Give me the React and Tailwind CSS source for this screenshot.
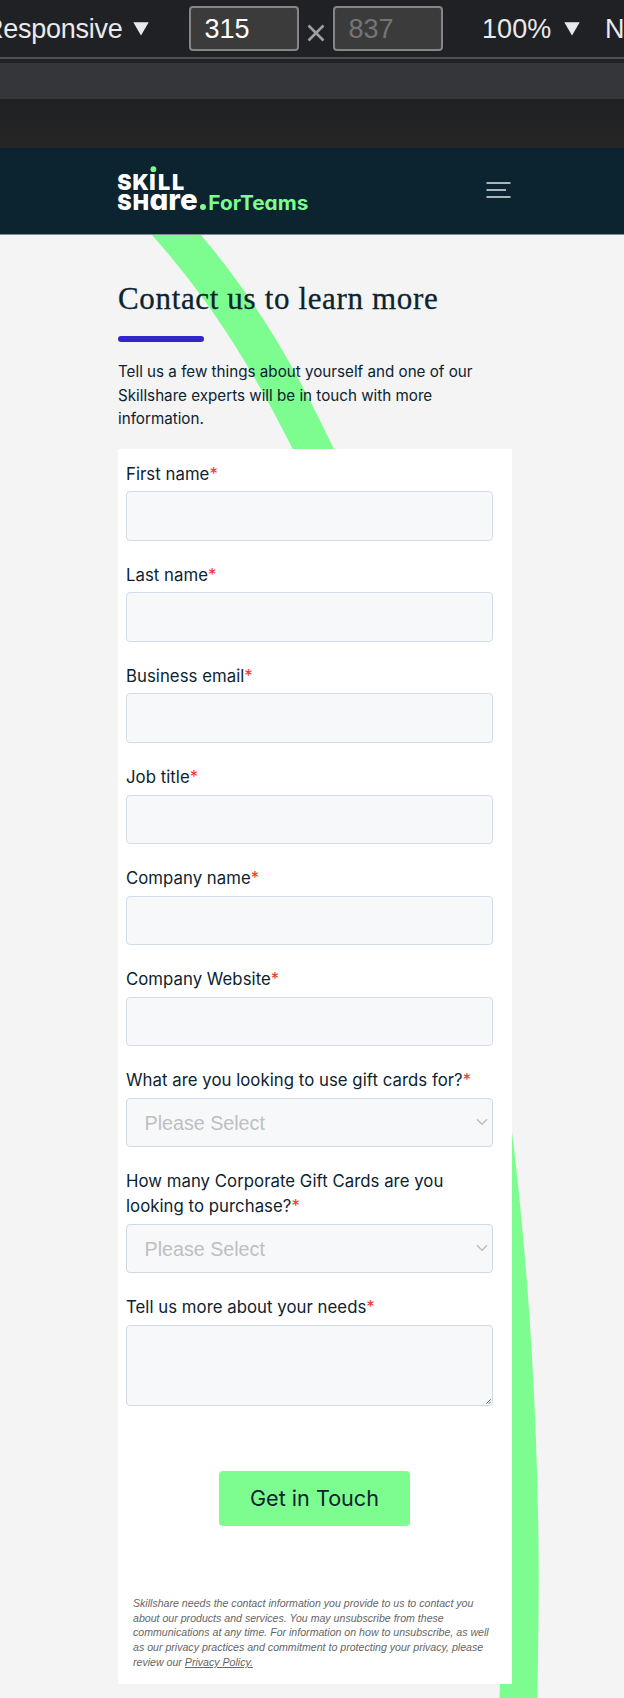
const TEXT_FIELDS = [
  "First name",
  "Last name",
  "Business email",
  "Job title",
  "Company name",
  "Company Website",
];

const SELECT_FIELDS = [
  "What are you looking to use gift cards for?",
  "How many Corporate Gift Cards are you looking to purchase?",
];

function Triangle() {
  return (
    <svg className="h-[14px] w-4 shrink-0" viewBox="0 0 16 14" fill="#e8eaed">
      <path d="M0.3 0.3h15.4L8 13.6z" />
    </svg>
  );
}

function DeviceToolbar() {
  return (
    <div className="font-['Liberation_Sans',sans-serif] text-[27px] text-[#e8eaed]">
      <div className="flex h-[57px] overflow-hidden bg-[#202124] whitespace-nowrap">
        <div className="flex w-[189px] shrink-0 justify-end pr-[40px]">
          <span className="flex h-[57px] items-center pt-px">
            <span className="pr-[10.5px] tracking-[-0.25px]">Responsive</span>
            <Triangle />
          </span>
        </div>
        <div className="mt-[6px] flex h-[45px] w-[110px] shrink-0 items-center rounded-[4px] border-2 border-[#858585] bg-[#3b3b3b] pt-[2px] pl-[13.5px] text-white">
          315
        </div>
        <svg className="mt-6 ml-2 h-[18px] w-[18px] shrink-0" viewBox="0 0 18 18">
          <path d="M1.5 1.5l15 15M16.5 1.5l-15 15" stroke="#9aa0a6" strokeWidth="2.6" />
        </svg>
        <div className="mt-[6px] ml-2 flex h-[45px] w-[110px] shrink-0 items-center rounded-[4px] border-2 border-[#858585] bg-[#3b3b3b] pt-[2px] pl-[13.5px] text-[#757575]">
          837
        </div>
        <span className="ml-[39px] flex h-[57px] shrink-0 items-center pt-px">
          <span className="w-[82px] tracking-[0.1px]">100%</span>
          <Triangle />
          <span className="ml-[25px]">No throttling</span>
        </span>
      </div>
      <div className="h-[2px] bg-[#4f4f53]" />
      <div className="h-1 bg-[#202124]" />
      <div className="h-9 bg-[#35363a]" />
      <div className="h-[49px] bg-linear-to-b from-[#202123] to-[#262626]" />
    </div>
  );
}

function Logo() {
  return (
    <svg
      className="mt-[17px] h-[48px] w-[194px] overflow-visible [font-feature-settings:'cv11']"
      viewBox="0 0 194 48"
      fill="#fff"
      fontFamily="Inter, sans-serif"
      fontWeight="900"
    >
      <text x="-0.7 14.4 31.3 40 54" y="24.8" fontSize="21.5">SKILL</text>
      <text x="-0.7 14.8" y="44.8" fontSize="21.5">SH</text>
      <text x="31.4 50.2 62" y="44.8" fontSize="29.5" fontWeight="800">are</text>
      <circle cx="35.4" cy="4.2" r="2.9" fill="#7dfc90" />
      <circle cx="85" cy="42" r="3" fill="#7dfc90" />
      <text x="90.3" y="44.8" fontSize="19.8" fontWeight="700" fill="#7dfc90" textLength="100" lengthAdjust="spacingAndGlyphs">
        ForTeams
      </text>
    </svg>
  );
}

function SiteHeader() {
  return (
    <header className="flex h-[87px] items-start justify-between border-b border-[#7f8b96] bg-[#0c2330] pr-[113px] pl-[118px]">
      <Logo />
      <svg className="mt-[32px] h-[20px] w-[25px]" viewBox="0 0 25 20" stroke="#aab4ba" strokeWidth="1.9">
        <path d="M0.5 3h24M0.5 10h19.5M0.5 17h24" />
      </svg>
    </header>
  );
}

function Label({ children }) {
  return (
    <div className="mb-[5px] text-[16.75px] leading-[24.8px] tracking-[0.04px]">
      {children}
      <span className="text-[#f03a2b]">*</span>
    </div>
  );
}

function TextField({ label }) {
  return (
    <label className="block">
      <Label>{label}</Label>
      <div className="h-[49.4px] rounded-[4px] border-[1.5px] border-[#d3dce8] bg-[#f6f8fa]" />
    </label>
  );
}

function SelectField({ label }) {
  return (
    <label className="block">
      <Label>{label}</Label>
      <div className="flex h-[49.4px] items-center justify-between rounded-[4px] border-[1.5px] border-[#cfdae6] bg-[#f6f8fa] pr-1 pl-[17.5px] font-['Liberation_Sans',sans-serif] text-[19.7px] text-[#bfbfbf]">
        <span className="pt-[2px]">Please Select</span>
        <svg className="h-2 w-3" viewBox="0 0 12 8" fill="none" stroke="#bdbdbd" strokeWidth="1.4">
          <path d="M1 1.2l5 5 5-5" />
        </svg>
      </div>
    </label>
  );
}

function ContactForm() {
  return (
    <form className="relative mt-[18px] h-[1235.3px] w-[394px] bg-white pt-[13px] pr-[19.5px] pl-2 text-[#0c2330]">
      <div className="flex flex-col gap-[21.9px]">
        {TEXT_FIELDS.map((label) => (
          <TextField key={label} label={label} />
        ))}
        {SELECT_FIELDS.map((label) => (
          <SelectField key={label} label={label} />
        ))}
        <label className="block">
          <Label>Tell us more about your needs</Label>
          <div className="flex h-[81.5px] items-end justify-end rounded-[4px] border-[1.5px] border-[#cfdae6] bg-[#f6f8fa] p-px">
            <svg className="h-[5px] w-[5px]" viewBox="0 0 5 5" stroke="#555" strokeWidth="0.9">
              <path d="M0.3 4.7l4.4-4.4M2.8 4.7l1.9-1.9" />
            </svg>
          </div>
        </label>
      </div>
      <div className="mt-[65px] ml-[93px]">
        <button
          type="button"
          className="h-[54.6px] w-[191px] rounded-[4px] bg-[#7dfc90] text-[21.6px] text-[#0c2330]"
        >
          Get in Touch
        </button>
      </div>
      <p className="mt-[70px] -mr-3 ml-[7px] font-['Liberation_Sans',sans-serif] text-[10.6px] leading-[14.8px] text-[#666] italic">
        Skillshare needs the contact information you provide to us to contact you
        <br />
        about our products and services. You may unsubscribe from these
        <br />
        communications at any time. For information on how to unsubscribe, as well
        <br />
        as our privacy practices and commitment to protecting your privacy, please
        <br />
        review our <a className="underline">Privacy Policy.</a>
      </p>
    </form>
  );
}

function GreenArc() {
  return (
    <svg className="absolute top-0 left-0 h-[1463px] w-[624px]" viewBox="0 235 624 1463" fill="#7dfc90">
      <path d="M152 235C209 299 251 366 292.7 449V451H334.6L333.8 449C293 362 254 298 201 235Z" />
      <path d="M512 1132C525 1237 538.7 1400 538.7 1580C538.7 1620 538 1660 537.3 1698H499.5L500 1684L505 1132Z" />
    </svg>
  );
}

export default function App() {
  return (
    <div className="h-[1698px] w-[624px] overflow-hidden bg-[#f4f4f4] font-['Inter',sans-serif]">
      <DeviceToolbar />
      <SiteHeader />
      <main className="relative h-[1463px] overflow-hidden pl-[118px] text-[#0c2330]">
        <GreenArc />
        <h1 className="relative pt-[46px] font-['Liberation_Serif',serif] text-[31px] leading-[36px] tracking-[0.65px] whitespace-nowrap [-webkit-text-stroke:0.3px_#0c2330]">
          Contact us to learn more
        </h1>
        <div className="relative mt-[19px] h-[6px] w-[86px] rounded-full bg-[#3127c9]" />
        <p className="relative mt-[18px] text-[15.2px] leading-[23.5px]">
          Tell us a few things about yourself and one of our
          <br />
          Skillshare experts will be in touch with more
          <br />
          information.
        </p>
        <ContactForm />
      </main>
    </div>
  );
}
